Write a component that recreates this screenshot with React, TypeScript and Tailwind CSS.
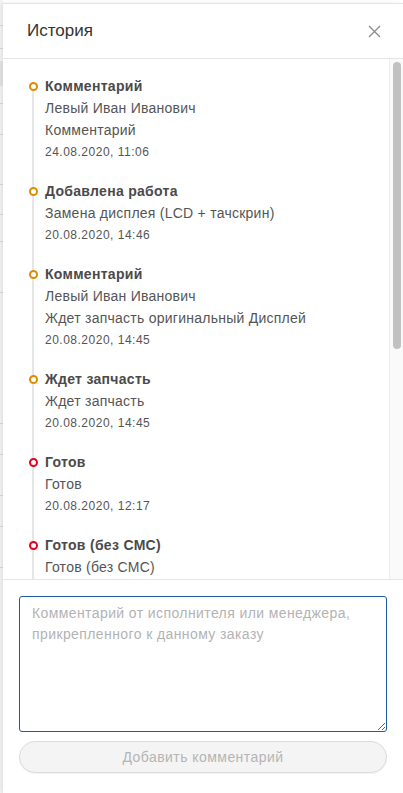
import { useState } from "react";

type HistoryItem = {
  title: string;
  lines: string[];
  date?: string;
  tone: "orange" | "red";
};

const items: HistoryItem[] = [
  { title: "Комментарий", lines: ["Левый Иван Иванович", "Комментарий"], date: "24.08.2020, 11:06", tone: "orange" },
  { title: "Добавлена работа", lines: ["Замена дисплея (LCD + тачскрин)"], date: "20.08.2020, 14:46", tone: "orange" },
  { title: "Комментарий", lines: ["Левый Иван Иванович", "Ждет запчасть оригинальный Дисплей"], date: "20.08.2020, 14:45", tone: "orange" },
  { title: "Ждет запчасть", lines: ["Ждет запчасть"], date: "20.08.2020, 14:45", tone: "orange" },
  { title: "Готов", lines: ["Готов"], date: "20.08.2020, 12:17", tone: "red" },
  { title: "Готов (без СМС)", lines: ["Готов (без СМС)"], tone: "red" },
];

function TimelineRow({ item, first }: { item: HistoryItem; first: boolean }) {
  return (
    <div className="flex">
      <div className="flex w-[10px] flex-col items-center">
        <div className={`${first ? "" : "bg-[#e6e6e6]"} h-[6px] w-[2px]`} />
        <div
          className={`${
            item.tone === "orange" ? "border-[#e08a00]" : "border-[#e8001c]"
          } h-[9px] w-[9px] shrink-0 rounded-full border-2 bg-white`}
        />
        <div className="w-[2px] flex-1 bg-[#e6e6e6]" />
      </div>
      <div className="ml-[7px] pb-[18px] text-[#555]">
        <div className="text-[14px] font-bold leading-[21px] tracking-[0.3px] text-[#4a4a4a]">{item.title}</div>
        {item.lines.map((l, i) => (
          <div key={i} className="text-[14px] leading-[22px] tracking-[0.25px]">
            {l}
          </div>
        ))}
        {item.date && (
          <div className="text-[12px] leading-[22px] tracking-[0.5px] text-[#555]">{item.date}</div>
        )}
      </div>
    </div>
  );
}

export default function App() {
  const [comment, setComment] = useState("");

  return (
    <div className="flex h-[793px] w-[403px] overflow-hidden bg-white font-['Liberation_Sans',Arial,sans-serif]">
      {/* page behind the drawer */}
      <div className="flex w-[3px] shrink-0 flex-col bg-[#f4f4f4]">
        <div className="mt-[25px] h-px bg-[#d9d9d9]" />
        <div className="mt-[22px] h-px bg-[#d9d9d9]" />
        <div className="mt-[12px] h-[25px] bg-[#e4e4e4]" />
        <div className="mt-[17px] h-px bg-[#d9d9d9]" />
        <div className="mt-[30px] h-px bg-[#d9d9d9]" />
        <div className="mt-[49px] h-px bg-[#d9d9d9]" />
        <div className="mt-[29px] h-px bg-[#d9d9d9]" />
        <div className="mt-[26px] h-px bg-[#d9d9d9]" />
        <div className="mt-[50px] h-px bg-[#d9d9d9]" />
        <div className="mt-[130px] h-px bg-[#d9d9d9]" />
        <div className="mt-[30px] h-px bg-[#d9d9d9]" />
        <div className="mt-[40px] h-px bg-[#d9d9d9]" />
        <div className="mt-[30px] h-px bg-[#d9d9d9]" />
        <div className="mt-[40px] h-px bg-[#d9d9d9]" />
      </div>

      {/* drawer */}
      <div className="mt-[3px] flex min-w-0 flex-1 flex-col border-t border-[#e3e3e3] shadow-[-2px_0_4px_rgba(0,0,0,0.08)]">
        <div className="flex h-[55px] shrink-0 items-center justify-between border-b border-[#e6e6e6] pl-[24px] pr-[22px]">
          <span className="text-[17px] text-[#333]">История</span>
          <button className="text-[#8a8a8a]">
            <svg width="13" height="13" viewBox="0 0 13 13" fill="none" stroke="currentColor" strokeWidth="1.3">
              <path d="M1 1l11 11M12 1L1 12" />
            </svg>
          </button>
        </div>

        <div className="flex h-[521px] shrink-0 border-b border-[#e6e6e6]">
          <div className="min-w-0 flex-1 overflow-hidden pl-[25px] pt-[17px]">
            {items.map((it, i) => (
              <TimelineRow key={i} item={it} first={i === 0} />
            ))}
          </div>
          <div className="w-[14px] shrink-0 border-l border-[#ececec] bg-[#fafafa] pt-[3px]">
            <div className="mx-auto h-[287px] w-[8px] rounded-full bg-[#c1c1c1]" />
          </div>
        </div>

        <div className="flex flex-col px-[16px] pt-[16px]">
          <textarea
            value={comment}
            onChange={(e) => setComment(e.target.value)}
            placeholder="Комментарий от исполнителя или менеджера, прикрепленного к данному заказу"
            className="h-[136px] w-full rounded-[3px] border border-[#1f5c9e] px-[12px] py-[6px] text-[14px] leading-[21px] tracking-[0.4px] text-[#333] outline-none placeholder:text-[#b3b3b3]"
          />
          <button
            disabled
            className="mt-[9px] h-[32px] w-full rounded-full border border-[#dcdcdc] bg-[#f4f4f4] text-[14px] tracking-[0.45px] text-[#b5b5b5] shadow-[0_1px_1px_rgba(0,0,0,0.05)]"
          >
            Добавить комментарий
          </button>
        </div>
      </div>
    </div>
  );
}
